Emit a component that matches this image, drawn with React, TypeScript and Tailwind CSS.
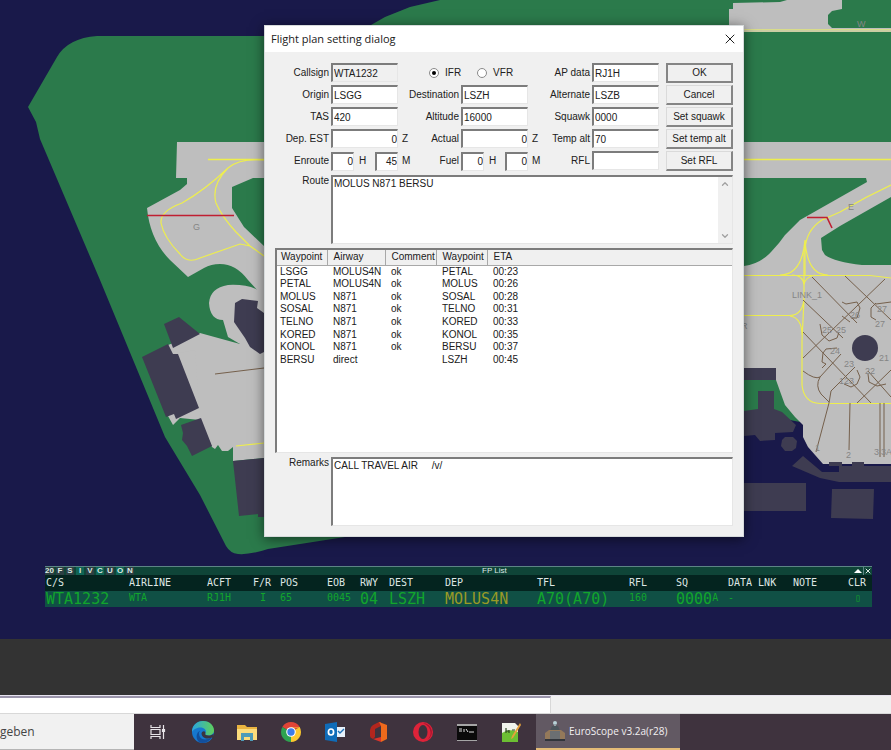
import { ChevronDown, ChevronUp, X } from "lucide-react";

const waypoints = [
  ["LSGG", "MOLUS4N", "ok", "PETAL", "00:23"],
  ["PETAL", "MOLUS4N", "ok", "MOLUS", "00:26"],
  ["MOLUS", "N871", "ok", "SOSAL", "00:28"],
  ["SOSAL", "N871", "ok", "TELNO", "00:31"],
  ["TELNO", "N871", "ok", "KORED", "00:33"],
  ["KORED", "N871", "ok", "KONOL", "00:35"],
  ["KONOL", "N871", "ok", "BERSU", "00:37"],
  ["BERSU", "direct", "", "LSZH", "00:45"],
];

const fpColumns = [
  { name: "C/S", width: "w-[83px]" },
  { name: "AIRLINE", width: "w-[78px]" },
  { name: "ACFT", width: "w-[46px]" },
  { name: "F/R", width: "w-[27px]" },
  { name: "POS", width: "w-[47px]" },
  { name: "EOB", width: "w-[33px]" },
  { name: "RWY", width: "w-[29px]" },
  { name: "DEST", width: "w-[56px]" },
  { name: "DEP", width: "w-[92px]" },
  { name: "TFL", width: "w-[92px]" },
  { name: "RFL", width: "w-[47px]" },
  { name: "SQ", width: "w-[52px]" },
  { name: "DATA LNK", width: "w-[65px]" },
  { name: "NOTE", width: "w-[55px]" },
  { name: "CLR", width: "" },
];

const filters = [
  { name: "20", active: false },
  { name: "F", active: false },
  { name: "S", active: false },
  { name: "I", active: true },
  { name: "V", active: false },
  { name: "C", active: true },
  { name: "U", active: false },
  { name: "O", active: true },
  { name: "N", active: false },
];

const sunken =
  "border-t-2 border-l-2 border-r border-b border-t-[#7c7c7c] border-l-[#7c7c7c] border-r-[#e6e6e6] border-b-[#e6e6e6] outline-none";

type FieldProps = {
  id: string;
  value: string;
  label?: string;
  className?: string;
};

const Field = ({ id, value, label, className = "w-full bg-white" }: FieldProps) => (
  <input
    id={id}
    type="text"
    aria-label={label}
    defaultValue={value}
    className={`h-[19px] min-w-0 pl-px leading-3 ${sunken} ${className}`}
  />
);

const FieldLabel = ({ htmlFor, text, unit }: { htmlFor: string; text: string; unit?: string }) => (
  <div className="flex items-center justify-between whitespace-nowrap">
    <span className="pl-[2px]">{unit}</span>
    <label htmlFor={htmlFor}>{text}</label>
  </div>
);

const DialogButton = ({ text, primary }: { text: string; primary?: boolean }) => (
  <button
    type="button"
    className={`ml-[5px] h-5 border-r-2 border-b-2 border-[#858585] bg-[#f0f0f0] leading-3 whitespace-nowrap ${
      primary ? "border-t-2 border-l-2" : "border-t border-l border-t-[#dadada] border-l-[#dadada]"
    }`}
  >
    {text}
  </button>
);

const HoursMinutes = ({ id, hours, minutes }: { id: string; hours: string; minutes: string }) => (
  <div className="flex items-center">
    <Field id={id} value={hours} className="w-[23px] bg-white text-right" />
    <span className="flex-1 pl-[5px]">H</span>
    <Field id={`${id}-min`} label={`${id} minutes`} value={minutes} className="w-[23px] bg-white text-right" />
  </div>
);

const AirportMap = () => (
  <svg
    viewBox="0 0 891 639"
    preserveAspectRatio="xMinYMin slice"
    className="absolute inset-0 h-full w-full font-['Liberation_Sans',sans-serif]"
    aria-hidden="true"
  >
    {/* grass */}
    <path
      fill="#2b7a4b"
      d="M28 107 57 57Q68 38 97 36H350L371 25 385 17 410 7 440 0H891V430H744V480L345 537 268 549Q250 555 238 554 230 553 226 546L200 495 165 437 100 280 40 139 36 122Z"
    />
    <path fill="#19194a" d="M744 405H891V639H744Z" />
    <path fill="#2b7a4b" d="M744 381H782L800 422 744 411Z" />
    {/* runway and aprons */}
    <g fill="#bebebe">
      <path d="M729 32V9H733V3L780 2 787 0H842V9L832 11 828 15V24L832 28H891V32Z" />
      <path d="M177 142H891V178H866L867 182 800 220 785 235 779 243 771 252Q760 264 744 266V368H776V380L781 394 785 405 795 417 803 425V437L808 447 823 464H891V265H862Q835 262 825 255L822 250 821 238 840 226 891 197V178H253L232 187V208L244 227 264 246V292L258 291 248 280Q236 264 220 264 211 264 204 268L188 277 170 260Q150 240 147 208L180 190 187 184V178H176Z" />
      <path d="M264 288 258 290Q246 284 228 285 210 288 209 303 210 320 223 320L228 337 240 344 200 333 168 345 176 365 198 415 212 447 215 449 218 445 222 451 228 451 233 447V461L264 458Z" />
      <path d="M168 345 173 354 195 350 200 420 180 418 173 425 168 416Z" />
    </g>
    {/* buildings */}
    <g fill="#3e3c51">
      <path d="M164 324 179 317 200 334 173 348Z" />
      <path d="M142 357 168 344 173 354 178 354 199 408 176 419 174 414 166 417Z" />
      <path d="M181 425 201 418 212 446 192 456 187 446 182 440 183 433Z" />
      <path d="M233 461 264 458V517L258 517V514L239 516Z" />
      <path d="M235 303 242 299 258 301 257 308 264 313V352L260 354 250 347 245 338 234 322Z" />
      <path d="M744 368H776V380H744Z" />
      <path d="M744 411 758 409V391H774V409L782 412 796 425 793 432 775 433V440L760 441 755 435 744 436Z" />
      <path d="M785 437H793L797 441 796 448 792 451H785L781 446 782 440Z" />
      <path d="M792 466 803 456 822 472H839V466H829V462H842V466H852V462H864V466H891V482H839L820 478Z" />
      <path d="M744 483H806V511H744Z" />
      <path d="M832 489 874 489 873 519 831 518Z" />
      <circle cx="865" cy="348" r="13" />
    </g>
    {/* centre lines */}
    <g fill="none" stroke="#eeee4e" strokeWidth="1.2">
      <path d="M744 31H891M744 29.500H891" stroke="#d8dc8a" />
      <path d="M208 159.500H891" strokeWidth="1.600" />
      <path d="M264 160Q240 158 228 168 205 190 182 203 160 211 161 223 164 238 180 254 187 264 200 258L240 244 250 246M228 168Q211 185 216 203 222 217 236 232L250 246 264 256" />
      <path d="M891 185 Q865 197 840 212L822 220Q806 230 805 250V275M805 240Q802 275 780 275M805 240Q807 275 828 275" />
      <path d="M744 275.500H870L891 278M804 250V300L802 340V385Q804 403 820 403.500H891M804 285Q803 275 792 275M804 285Q805 277 815 275M744 315.500H790Q803 315 804 298M790 316Q802 318 802 335" />
      <path d="M236 446 264 443" />
    </g>
    <g stroke="#c01f32" strokeWidth="1.600" fill="none">
      <path d="M147 215.500H234M807 217.500H827L832 228" />
    </g>
    <g stroke="#75604c" strokeWidth="1" fill="none">
      <path d="M215 374 264 368M812 277 857 323M845 276 891 320M885 279 803 358M803 300 843 338M803 332 871 403M857 403 891 370M842 316 850 322M891 397 868 371" />
      <path d="M803 371Q815 380 820 377L841 354M820 377Q815 386 821 394L829 402M855 367 831 391 829 403 816 452M850 403 849 450M880 403V457M884 403V457" />
      <path d="M842 302 846 304 857 302 860 308 857 318 851 318M876 303 871 308 871 317 876 320M876 304 891 302M820 324 822 335 829 341 837 338 839 332M837 348 826 349 823 353 822 362 826 364 822 368M844 384 851 387 857 384 860 377 857 370M868 374 869 382 877 386 886 384" />
    </g>
    <g fill="#858585" fontSize="9">
      <text x="193" y="230">G</text>
      <text x="857" y="27">W</text>
      <text x="848" y="210">E</text>
      <text x="792" y="298">LINK_1</text>
      <text x="850" y="318">26</text>
      <text x="877" y="312">27</text>
      <text x="875" y="327">27</text>
      <text x="822" y="333">25</text>
      <text x="836" y="333">25</text>
      <text x="830" y="354">24</text>
      <text x="844" y="367">23</text>
      <text x="839" y="384">123</text>
      <text x="865" y="374">22</text>
      <text x="879" y="361">21</text>
      <text x="815" y="451">1</text>
      <text x="846" y="458">2</text>
      <text x="874" y="455">3</text>
      <text x="881" y="455">3A</text>
      <text x="741" y="329">R</text>
    </g>
  </svg>
);

const FlightPlanDialog = () => (
  <div
    role="dialog"
    aria-labelledby="dialog-title"
    className="absolute top-[25px] left-[264px] w-[480px] border border-[#d6dadb] bg-[#f0f0f0] pb-[10px] font-['Liberation_Sans',sans-serif] text-[10px] leading-3 text-[#202020] shadow-[0_2px_12px_rgba(0,0,0,0.55)]"
  >
    <div className="flex h-[26px] items-center justify-between bg-white pr-[5px] pl-[6px]">
      <h1 id="dialog-title" className="font-['Open_Sans',sans-serif] text-[11px]">
        Flight plan setting dialog
      </h1>
      <button type="button" aria-label="Close">
        <X className="size-4" strokeWidth={1.5} />
      </button>
    </div>

    <form className="px-[10px] pt-[11px]">
      <div className="grid grid-cols-[54px_67px_59px_67px_60px_67px_72px] gap-[2px]">
        <FieldLabel htmlFor="callsign" text="Callsign" />
        <Field id="callsign" value="WTA1232" className="w-full bg-[#f0f0f0]" />
        <div className="col-span-2 flex items-center gap-4 pl-[29px]">
          <label className="flex items-center gap-[6px]">
            <input
              type="radio"
              name="rules"
              defaultChecked
              className="flex size-[10px] appearance-none items-center justify-center rounded-full border border-[#8a8a8a] bg-white checked:before:size-1 checked:before:rounded-full checked:before:bg-black checked:before:content-['']"
            />
            IFR
          </label>
          <label className="flex items-center gap-[6px]">
            <input
              type="radio"
              name="rules"
              className="size-[10px] appearance-none rounded-full border border-[#8a8a8a] bg-white"
            />
            VFR
          </label>
        </div>
        <FieldLabel htmlFor="ap-data" text="AP data" />
        <Field id="ap-data" value="RJ1H" />
        <DialogButton text="OK" primary />

        <FieldLabel htmlFor="origin" text="Origin" />
        <Field id="origin" value="LSGG" />
        <FieldLabel htmlFor="destination" text="Destination" />
        <Field id="destination" value="LSZH" />
        <FieldLabel htmlFor="alternate" text="Alternate" />
        <Field id="alternate" value="LSZB" />
        <DialogButton text="Cancel" />

        <FieldLabel htmlFor="tas" text="TAS" />
        <Field id="tas" value="420" />
        <FieldLabel htmlFor="altitude" text="Altitude" />
        <Field id="altitude" value="16000" />
        <FieldLabel htmlFor="squawk" text="Squawk" />
        <Field id="squawk" value="0000" />
        <DialogButton text="Set squawk" />

        <FieldLabel htmlFor="dep-est" text="Dep. EST" />
        <Field id="dep-est" value="0" className="w-full bg-white text-right" />
        <FieldLabel htmlFor="actual" text="Actual" unit="Z" />
        <Field id="actual" value="0" className="w-full bg-white text-right" />
        <FieldLabel htmlFor="temp-alt" text="Temp alt" unit="Z" />
        <Field id="temp-alt" value="70" />
        <DialogButton text="Set temp alt" />

        <FieldLabel htmlFor="enroute" text="Enroute" />
        <HoursMinutes id="enroute" hours="0" minutes="45" />
        <FieldLabel htmlFor="fuel" text="Fuel" unit="M" />
        <HoursMinutes id="fuel" hours="0" minutes="0" />
        <FieldLabel htmlFor="rfl" text="RFL" unit="M" />
        <Field id="rfl" value="" />
        <DialogButton text="Set RFL" />
      </div>

      <div className="mt-1 flex gap-[2px]">
        <label htmlFor="route" className="w-[54px] text-right">
          Route
        </label>
        <div className="relative flex-1">
          <textarea
            id="route"
            defaultValue="MOLUS N871 BERSU"
            className={`block h-[69px] w-full resize-none bg-white pt-px pr-4 pl-px ${sunken}`}
          />
          <div className="absolute top-[2px] right-px bottom-px flex w-[14px] flex-col items-center justify-between bg-[#f0f0f0] py-[2px] text-[#a0a0a0]">
            <ChevronUp className="size-[10px]" strokeWidth={3} />
            <ChevronDown className="size-[10px]" strokeWidth={3} />
          </div>
        </div>
      </div>

      <div className={`mt-1 h-[205px] bg-white ${sunken}`}>
        <table className="h-[116px] w-full table-fixed border-collapse text-left">
          <thead>
            <tr className="h-[15px] bg-[#f0f0f0]">
              <th className="w-[50px] border-r border-b border-[#a8a8a8] pl-1 font-normal">Waypoint</th>
              <th className="w-[58px] border-r border-b border-[#a8a8a8] pl-[6px] font-normal">Airway</th>
              <th className="w-[51px] border-r border-b border-[#a8a8a8] pl-[6px] font-normal">Comment</th>
              <th className="w-[51px] border-r border-b border-[#a8a8a8] pl-[6px] font-normal">Waypoint</th>
              <th className="border-b border-[#a8a8a8] pl-[6px] font-normal">ETA</th>
            </tr>
          </thead>
          <tbody>
            {waypoints.map(([from, airway, comment, to, eta]) => (
              <tr key={from}>
                <td className="pl-[3px]">{from}</td>
                <td className="pl-[6px]">{airway}</td>
                <td className="pl-[6px]">{comment}</td>
                <td className="pl-[6px]">{to}</td>
                <td className="pl-[6px]">{eta}</td>
              </tr>
            ))}
          </tbody>
        </table>
      </div>

      <div className="mt-1 flex gap-[2px]">
        <label htmlFor="remarks" className="w-[54px] text-right">
          Remarks
        </label>
        <textarea
          id="remarks"
          defaultValue="CALL TRAVEL AIR     /v/"
          className={`block h-[69px] flex-1 resize-none bg-white pt-px pl-px ${sunken}`}
        />
      </div>
    </form>
  </div>
);

const FpList = () => (
  <section className="absolute top-[566px] right-[19px] left-[45px] bg-[#04241f] font-['DejaVu_Sans_Mono',monospace]">
    <div className="flex h-[9px] items-center justify-between border-t border-[#5c8585] bg-[#0f4538] font-['Liberation_Sans',sans-serif] text-[8px] leading-[8px] text-[#dce8e4]">
      <div className="flex gap-[2px]">
        {filters.map(({ name, active }) => (
          <button
            key={name}
            type="button"
            className={`w-2 text-center font-bold first:w-[9px] ${active ? "bg-[#0f6555]" : "bg-[#2c3f42]"}`}
          >
            {name}
          </button>
        ))}
      </div>
      <h2 className="flex-1 pl-[348px]">FP List</h2>
      <div className="flex">
        <button type="button" aria-label="Collapse" className="flex h-2 w-[10px] items-center justify-center">
          <svg viewBox="0 0 8 4" className="h-1 w-2" fill="#fff">
            <path d="M0 4 4 0 8 4Z" />
          </svg>
        </button>
        <button type="button" aria-label="Close list" className="border-l border-[#5c8585]">
          <X className="size-2" strokeWidth={3} />
        </button>
      </div>
    </div>
    <table className="w-full table-fixed border-collapse text-left text-[10px] leading-4 whitespace-nowrap">
      <thead>
        <tr className="h-4 text-[#dfe6e4]">
          {fpColumns.map((column) => (
            <th key={column.name} className={`p-0 pl-px font-normal ${column.width}`}>
              {column.name}
            </th>
          ))}
        </tr>
      </thead>
      <tbody>
        <tr className="h-4 bg-[#105045] text-[#12a52c]">
          <td className="pl-px text-[15px] leading-4">WTA1232</td>
          <td className="pl-px align-top leading-[14px]">WTA</td>
          <td className="pl-px align-top leading-[14px]">RJ1H</td>
          <td className="pl-2 align-top leading-[14px]">I</td>
          <td className="pl-px align-top leading-[14px]">65</td>
          <td className="pl-px align-top leading-[14px]">0045</td>
          <td className="pl-px text-[15px] leading-4">04</td>
          <td className="pl-px text-[15px] leading-4">LSZH</td>
          <td className="pl-px text-[15px] leading-4 text-[#9a9a26]">MOLUS4N</td>
          <td className="pl-px text-[15px] leading-4">A70(A70)</td>
          <td className="pl-px align-top leading-[14px]">160</td>
          <td className="p-0">
            <div className="flex pl-px">
              <span className="text-[15px] leading-4">0000</span>
              <span className="leading-[14px]">A</span>
            </div>
          </td>
          <td className="pl-px align-top leading-[14px]">-</td>
          <td />
          <td className="pl-2 align-top leading-[14px]">▯</td>
        </tr>
      </tbody>
    </table>
  </section>
);

const TaskViewIcon = () => (
  <svg viewBox="0 0 16 16" className="size-4" fill="none" stroke="#e8e4e8" strokeWidth="1.200">
    <path d="M1 1V3.500H10V1M1 15V12.500H10V15M1 5.500H10V10.500H1ZM13.500 1V15" />
    <path d="M12.500 5.500H14.500V7.500H12.500Z" fill="#e8e4e8" />
  </svg>
);

const EdgeIcon = () => (
  <svg viewBox="0 0 22 22" className="size-[22px]">
    <defs>
      <linearGradient id="edge-top" x1="0" x2="1">
        <stop offset="0" stopColor="#2aa6e0" />
        <stop offset="1" stopColor="#5fd05a" />
      </linearGradient>
    </defs>
    <circle cx="11" cy="11" r="11" fill="#1678cf" />
    <path d="M0 11C0 4 5 0 11 0C18 0 22 5 22 9.500C22 13 19 14.500 16.500 14.500C13.500 14.500 12.500 13.500 13.500 12C15 9 12 6.500 8.500 6.500C4 6.500 1 9 0 11Z" fill="url(#edge-top)" />
    <path d="M7 12C7 18 12 20.500 20 16.500C17 21 12 23 7.500 21.500C3 18 4 11 8.500 9.500C7.500 10.500 7 11 7 12Z" fill="#124f9c" />
    <path d="M13.500 12C12.500 13.500 13.500 14.500 16.500 14.500C18.500 14.500 20.500 14 21.500 12.500L22 18 20 16.500C15 19 10 17 9.500 12.500C10 10 13 9.500 13.500 12Z" fill="#3a3440" />
  </svg>
);

const FolderIcon = () => (
  <svg viewBox="0 0 20 17" className="h-[17px] w-5">
    <path d="M0 1H8L10 3H20V16H0Z" fill="#e9b440" />
    <path d="M0 5H20V16H0Z" fill="#fbdc7c" />
    <path d="M4 9H16V17H13V13H7V17H4Z" fill="#4d9bb8" />
  </svg>
);

const ChromeIcon = () => (
  <svg viewBox="0 0 20 20" className="size-5">
    <path d="M10 10 1.340 5A10 10 0 0 1 18.660 5Z" fill="#e04436" />
    <path d="M10 10 18.660 5A10 10 0 0 1 10 20Z" fill="#fbc82e" />
    <path d="M10 10V20A10 10 0 0 1 1.340 5Z" fill="#2ea350" />
    <path d="M10 5.500H18.900L18.660 5H10ZM10 20 14 12.500 10 14Z" fill="#fbc82e" />
    <circle cx="10" cy="10" r="4.800" fill="#fff" />
    <circle cx="10" cy="10" r="3.700" fill="#3c7ce8" />
  </svg>
);

const OutlookIcon = () => (
  <svg viewBox="0 0 20 20" className="size-5">
    <path d="M11 5H20V15H11Z" fill="#e8f2fb" />
    <path d="M13 9 15 11 19 7" fill="none" stroke="#1d72b8" strokeWidth="1.400" />
    <path d="M0 2 12 0V20L0 18Z" fill="#0f6cb8" />
    <ellipse cx="6" cy="10" rx="2.600" ry="3" fill="none" stroke="#fff" strokeWidth="1.700" />
  </svg>
);

const OfficeIcon = () => (
  <svg viewBox="0 0 18 20" className="h-5 w-[18px]">
    <path d="M9 0 3 3Q0 5 0 8V14Q0 16 3 17L5 15V7L11 4V0Z" fill="#b3261e" />
    <path d="M9 0 17 3V17L11 20V4Z" fill="#ee6a1c" />
    <path d="M3 17 11 15V20Z" fill="#d9342b" />
  </svg>
);

const OperaIcon = () => (
  <svg viewBox="0 0 20 20" className="size-5">
    <circle cx="10" cy="10" r="10" fill="#dd2339" />
    <path d="M10 1A9 9 0 0 1 14 18Q18 15 17.500 10 17 4 10 1Z" fill="#a91530" />
    <ellipse cx="10" cy="10" rx="4.500" ry="7" fill="#3c323c" />
  </svg>
);

const TerminalIcon = () => (
  <svg viewBox="0 0 20 17" className="h-[17px] w-5">
    <path d="M0 0H20V17H0Z" fill="#a6a6a6" />
    <path d="M0 2H20V16H0Z" fill="#0a0a0a" />
    <path d="M2 5H5M2 7H5M7 5V8M9 5 11 8M12 8H17" stroke="#ddd" strokeWidth="1" fill="none" />
  </svg>
);

const NotepadIcon = () => (
  <svg viewBox="0 0 20 21" className="h-[21px] w-5">
    <path d="M1 1H14L17 4V20H1Z" fill="#f0f3ec" />
    <path d="M1 11Q9 6 17 10V20H1Z" fill="#6cbf33" />
    <path d="M5 6V11M5 9H8M8 8V11M11 8H14" stroke="#314b24" strokeWidth="1.200" />
    <path d="M19 1 20 3 12 16 10 17 11 14Z" fill="#e6a13b" />
  </svg>
);

const EuroScopeIcon = () => (
  <svg viewBox="0 0 20 20" className="size-5">
    <circle cx="10" cy="2" r="2" fill="#b8d2d8" />
    <path d="M9 3H11V5H9Z" fill="#8fa3a8" />
    <path d="M7 5H13L15 10H5Z" fill="#4b555c" />
    <path d="M4 9H16L20 12V18H0V12Z" fill="#94795a" />
    <path d="M5 10H15V18H5Z" fill="#6b6f72" />
    <path d="M0 18H20V20H0Z" fill="#31353b" />
  </svg>
);

const apps = [
  { name: "Edge", Icon: EdgeIcon },
  { name: "Explorer", Icon: FolderIcon },
  { name: "Chrome", Icon: ChromeIcon },
  { name: "Outlook", Icon: OutlookIcon },
  { name: "Office", Icon: OfficeIcon },
  { name: "Opera", Icon: OperaIcon },
  { name: "Terminal", Icon: TerminalIcon },
  { name: "Notepad", Icon: NotepadIcon },
];

const Taskbar = () => (
  <footer className="flex h-9 bg-[#3f333e] font-['Open_Sans',sans-serif]">
    <input
      type="text"
      aria-label="Search"
      placeholder="geben"
      className="w-[134px] border-b border-[#b5b5b5] bg-[#f1f1f1] text-[12px] outline-none placeholder:text-[#444]"
    />
    <button type="button" aria-label="Task view" className="flex w-[47px] items-center justify-center">
      <TaskViewIcon />
    </button>
    {apps.map(({ name, Icon }) => (
      <button key={name} type="button" aria-label={name} className="flex w-11 items-center justify-center">
        <Icon />
      </button>
    ))}
    <button
      type="button"
      className="ml-[3px] flex w-36 items-center gap-1 border-b-2 border-[#e3bb77] bg-[#625963] pl-[9px] text-[10px] whitespace-nowrap text-[#f2f0f2]"
    >
      <EuroScopeIcon />
      EuroScope v3.2a(r28)
    </button>
  </footer>
);

export default function App() {
  return (
    <div className="flex min-h-screen flex-col bg-[#333333]">
      <main className="relative min-h-[639px] flex-1 overflow-hidden bg-[#19194a]">
        <AirportMap />
        <FlightPlanDialog />
        <FpList />
      </main>
      <div className="h-14 bg-[#333333]" />
      <div className="flex h-[19px] border-t border-b border-t-[#e8e4f0] border-b-[#d8d8d8] bg-[#f0f0f0]">
        <input
          type="text"
          aria-label="Command line"
          className="w-[551px] border-t-2 border-r border-t-[#9a94aa] border-r-[#d8d8d8] bg-white outline-none"
        />
      </div>
      <Taskbar />
    </div>
  );
}
